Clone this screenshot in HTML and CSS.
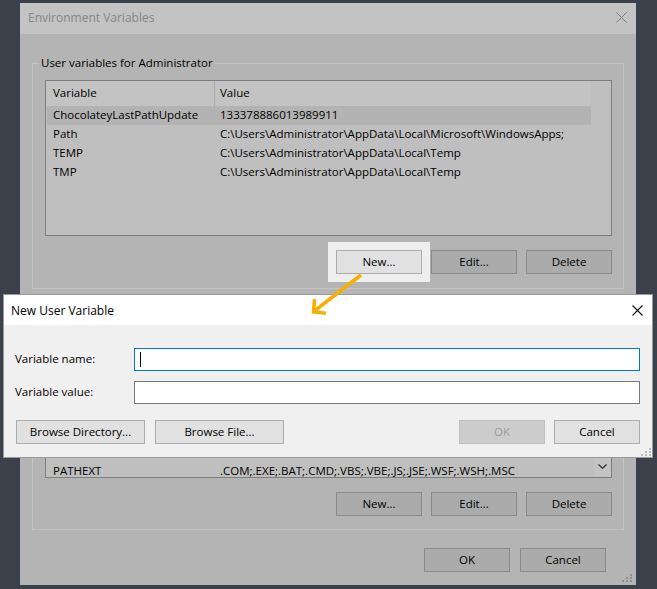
FILE: index.html
```html
<!DOCTYPE html>
<html>
<head>
<meta charset="utf-8">
<link rel="stylesheet" href="styles.css">
</head>
<body>
<div class="stage">
  <div class="window">
    <div class="titlebar">
      <span>Environment Variables</span>
      <svg class="wclose" width="11" height="11" viewBox="0 0 11 11"><path d="M0.5 0.5L10.5 10.5M10.5 0.5L0.5 10.5" stroke="#7f7f7f" stroke-width="1" fill="none"/></svg>
    </div>
    <div class="wbody">
      <fieldset class="group">
        <legend>User variables for Administrator</legend>
        <div class="list user">
          <div class="cols">
            <div class="lhead"><span class="c1">Variable</span><span class="c2">Value</span></div>
            <div class="row sel"><span class="c1">ChocolateyLastPathUpdate</span><span class="c2">133378886013989911</span></div>
            <div class="row"><span class="c1">Path</span><span class="c2">C:\Users\Administrator\AppData\Local\Microsoft\WindowsApps;</span></div>
            <div class="row"><span class="c1">TEMP</span><span class="c2">C:\Users\Administrator\AppData\Local\Temp</span></div>
            <div class="row"><span class="c1">TMP</span><span class="c2">C:\Users\Administrator\AppData\Local\Temp</span></div>
          </div>
        </div>
        <div class="btns">
          <button class="btn lit">New...</button>
          <button class="btn">Edit...</button>
          <button class="btn">Delete</button>
        </div>
      </fieldset>
      <fieldset class="group sys">
        <div class="list syslist">
          <div class="cols">
            <div class="rows">
              <div class="row last"><span class="c1">PATHEXT</span><span class="c2">.COM;.EXE;.BAT;.CMD;.VBS;.VBE;.JS;.JSE;.WSF;.WSH;.MSC</span></div>
            </div>
          </div>
          <div class="sb">
            <div class="sbdown"><svg width="9" height="5" viewBox="0 0 9 5"><path d="M0.5 0.5L4.5 4.2L8.5 0.5" stroke="#3a3a3a" stroke-width="1.4" fill="none"/></svg></div>
          </div>
        </div>
        <div class="btns">
          <button class="btn">New...</button>
          <button class="btn">Edit...</button>
          <button class="btn">Delete</button>
        </div>
      </fieldset>
      <div class="footer">
        <button class="btn">OK</button>
        <button class="btn">Cancel</button>
      </div>
    </div>
    <svg class="grip wgrip" width="11" height="9" viewBox="0 0 11 9"><g fill="#8e8e8e"><rect x="8" y="0" width="2" height="2"/><rect x="4" y="3" width="2" height="2"/><rect x="8" y="3" width="2" height="2"/><rect x="0" y="6" width="2" height="2"/><rect x="4" y="6" width="2" height="2"/><rect x="8" y="6" width="2" height="2"/></g></svg>
  </div>
</div>

<div class="modal">
  <div class="mtitle">
    <span>New User Variable</span>
    <svg class="mclose" width="11" height="11" viewBox="0 0 11 11"><path d="M0.5 0.5L10.5 10.5M10.5 0.5L0.5 10.5" stroke="#111" stroke-width="1.1" fill="none"/></svg>
  </div>
  <div class="mbody">
    <div class="form">
      <label>Variable name:</label>
      <div class="input focus"><span class="caret"></span></div>
      <label>Variable value:</label>
      <div class="input"></div>
    </div>
    <div class="mbtns">
      <button class="btn wide">Browse Directory...</button>
      <button class="btn wide">Browse File...</button>
      <button class="btn disabled push">OK</button>
      <button class="btn">Cancel</button>
    </div>
  </div>
  <svg class="grip mgrip" width="10" height="8" viewBox="0 0 10 8"><g fill="#bdbdbd"><rect x="8" y="0" width="2" height="2"/><rect x="4" y="3" width="2" height="2"/><rect x="8" y="3" width="2" height="2"/><rect x="0" y="6" width="2" height="2"/><rect x="4" y="6" width="2" height="2"/><rect x="8" y="6" width="2" height="2"/></g></svg>
</div>

<svg class="arrow" width="70" height="55" viewBox="0 0 70 55">
  <g stroke="#f5b000" stroke-width="3.5" fill="none" stroke-linecap="butt">
    <path d="M61 7L15 42.5"/>
    <path d="M14.6 31L13.5 44L26 45.2" stroke-linejoin="miter"/>
  </g>
</svg>
</body>
</html>
```

FILE: styles.css
```css
* { box-sizing: border-box; }
html, body { margin: 0; }
body {
  width: 657px;
  height: 589px;
  overflow: hidden;
  position: relative;
  background: #3b414b;
  font-family: "Segoe UI", "Open Sans", sans-serif;
  font-size: 11.5px;
  color: #000;
}
.stage { padding: 3px 0 0 20px; }
.window {
  position: relative;
  width: 616px;
  height: 582px;
  background: #b4b4b4;
  display: flex;
  flex-direction: column;
}
.titlebar {
  height: 31px;
  background: #c3c3c3;
  color: #868686;
  font-size: 12px;
  display: flex;
  align-items: center;
  justify-content: space-between;
  padding: 0 9px 2px 8px;
}
.wbody {
  padding: 21px 12px 13px 12px;
  display: flex;
  flex-direction: column;
}
fieldset.group {
  margin: 0;
  min-width: 0;
  padding: 9px 11px 14px 12px;
  border: 1px solid #c4c4c4;
}
fieldset.sys {
  margin-top: 11px;
  padding-top: 16px;
  padding-bottom: 13px;
}
legend {
  padding: 0 2px;
  margin-left: -6px;
  height: 16px;
  line-height: 16px;
}
.list {
  height: 156px;
  border: 1px solid #7e7e7e;
  background: #bfbfbf;
  display: flex;
  overflow: hidden;
}
.syslist { height: 161px; }
.cols {
  width: 544px;
  margin-left: 1px;
  display: flex;
  flex-direction: column;
}
.lhead {
  height: 25px;
  flex: none;
  display: flex;
  background: #c3c3c3;
}
.lhead .c1 { border-right: 1px solid #a9a9a9; }
.lhead span {
  display: flex;
  align-items: center;
  padding-bottom: 2px;
}
.row {
  height: 19px;
  flex: none;
  display: flex;
  align-items: flex-start;
  padding-top: 2px;
  line-height: 14px;
  white-space: nowrap;
}
.c1 { width: 168px; padding-left: 6px; flex: none; }
.c2 { padding-left: 5px; overflow: hidden; }
.row.sel { background: #b3b3b3; }
.rows {
  flex: 1;
  display: flex;
  flex-direction: column;
  justify-content: flex-end;
  overflow: hidden;
}
.row.last {
  height: 16px;
  padding-top: 2px;
  line-height: 13px;
  margin-bottom: -1px;
}
.sb {
  margin-left: auto;
  width: 17px;
  background: #bcbcbc;
  display: flex;
  flex-direction: column;
  justify-content: flex-end;
}
.sbdown {
  height: 20px;
  background: #c3c3c3;
  display: flex;
  align-items: center;
  justify-content: center;
  padding-bottom: 2px;
}
.btns {
  margin-top: 14px;
  display: flex;
  justify-content: flex-end;
  gap: 9px;
}
.btn {
  font: inherit;
  color: #000;
  height: 24px;
  width: 86px;
  padding: 0 0 2px 0;
  margin: 0;
  background: #ababab;
  border: 1px solid #8a8a8a;
  border-radius: 0;
}
.btn.lit {
  background: #e1e1e1;
  border-color: #adadad;
  box-shadow: 0 0 0 8px #eeeeee;
}
.footer {
  margin-top: 18px;
  padding-right: 18px;
  display: flex;
  justify-content: flex-end;
  gap: 10px;
}
.grip { position: absolute; }
.wgrip { right: 3px; bottom: 2px; }

.modal {
  position: absolute;
  left: 3px;
  top: 294px;
  width: 650px;
  height: 164px;
  border: 1px solid #9a9a9a;
  background: #f0f0f0;
}
.mtitle {
  height: 30px;
  background: #fff;
  font-size: 12px;
  display: flex;
  align-items: center;
  justify-content: space-between;
  padding: 0 9px 0 7px;
}
.mbody { padding: 23px 12px 0 11px; }
.form {
  display: grid;
  grid-template-columns: 119px 1fr;
  row-gap: 10px;
  align-items: center;
}
.form label { padding-bottom: 2px; }
.input {
  height: 23px;
  background: #fff;
  border: 1px solid #7a7a7a;
  padding: 3px 5px;
}
.input.focus { border-color: #0078d7; }
.caret {
  display: block;
  width: 1px;
  height: 15px;
  background: #000;
}
.mbtns {
  margin-top: 16px;
  margin-left: 1px;
  display: flex;
  gap: 10px;
}
.modal .btn {
  background: #e1e1e1;
  border-color: #adadad;
}
.modal .btn.wide { width: 129px; }
.modal .btn.disabled {
  background: #cccccc;
  border-color: #bfbfbf;
  color: #9b9b9b;
}
.push { margin-left: auto; margin-right: -1px; }
.mgrip { right: 1px; bottom: 1px; }
.arrow {
  position: absolute;
  left: 300px;
  top: 268px;
}
```
